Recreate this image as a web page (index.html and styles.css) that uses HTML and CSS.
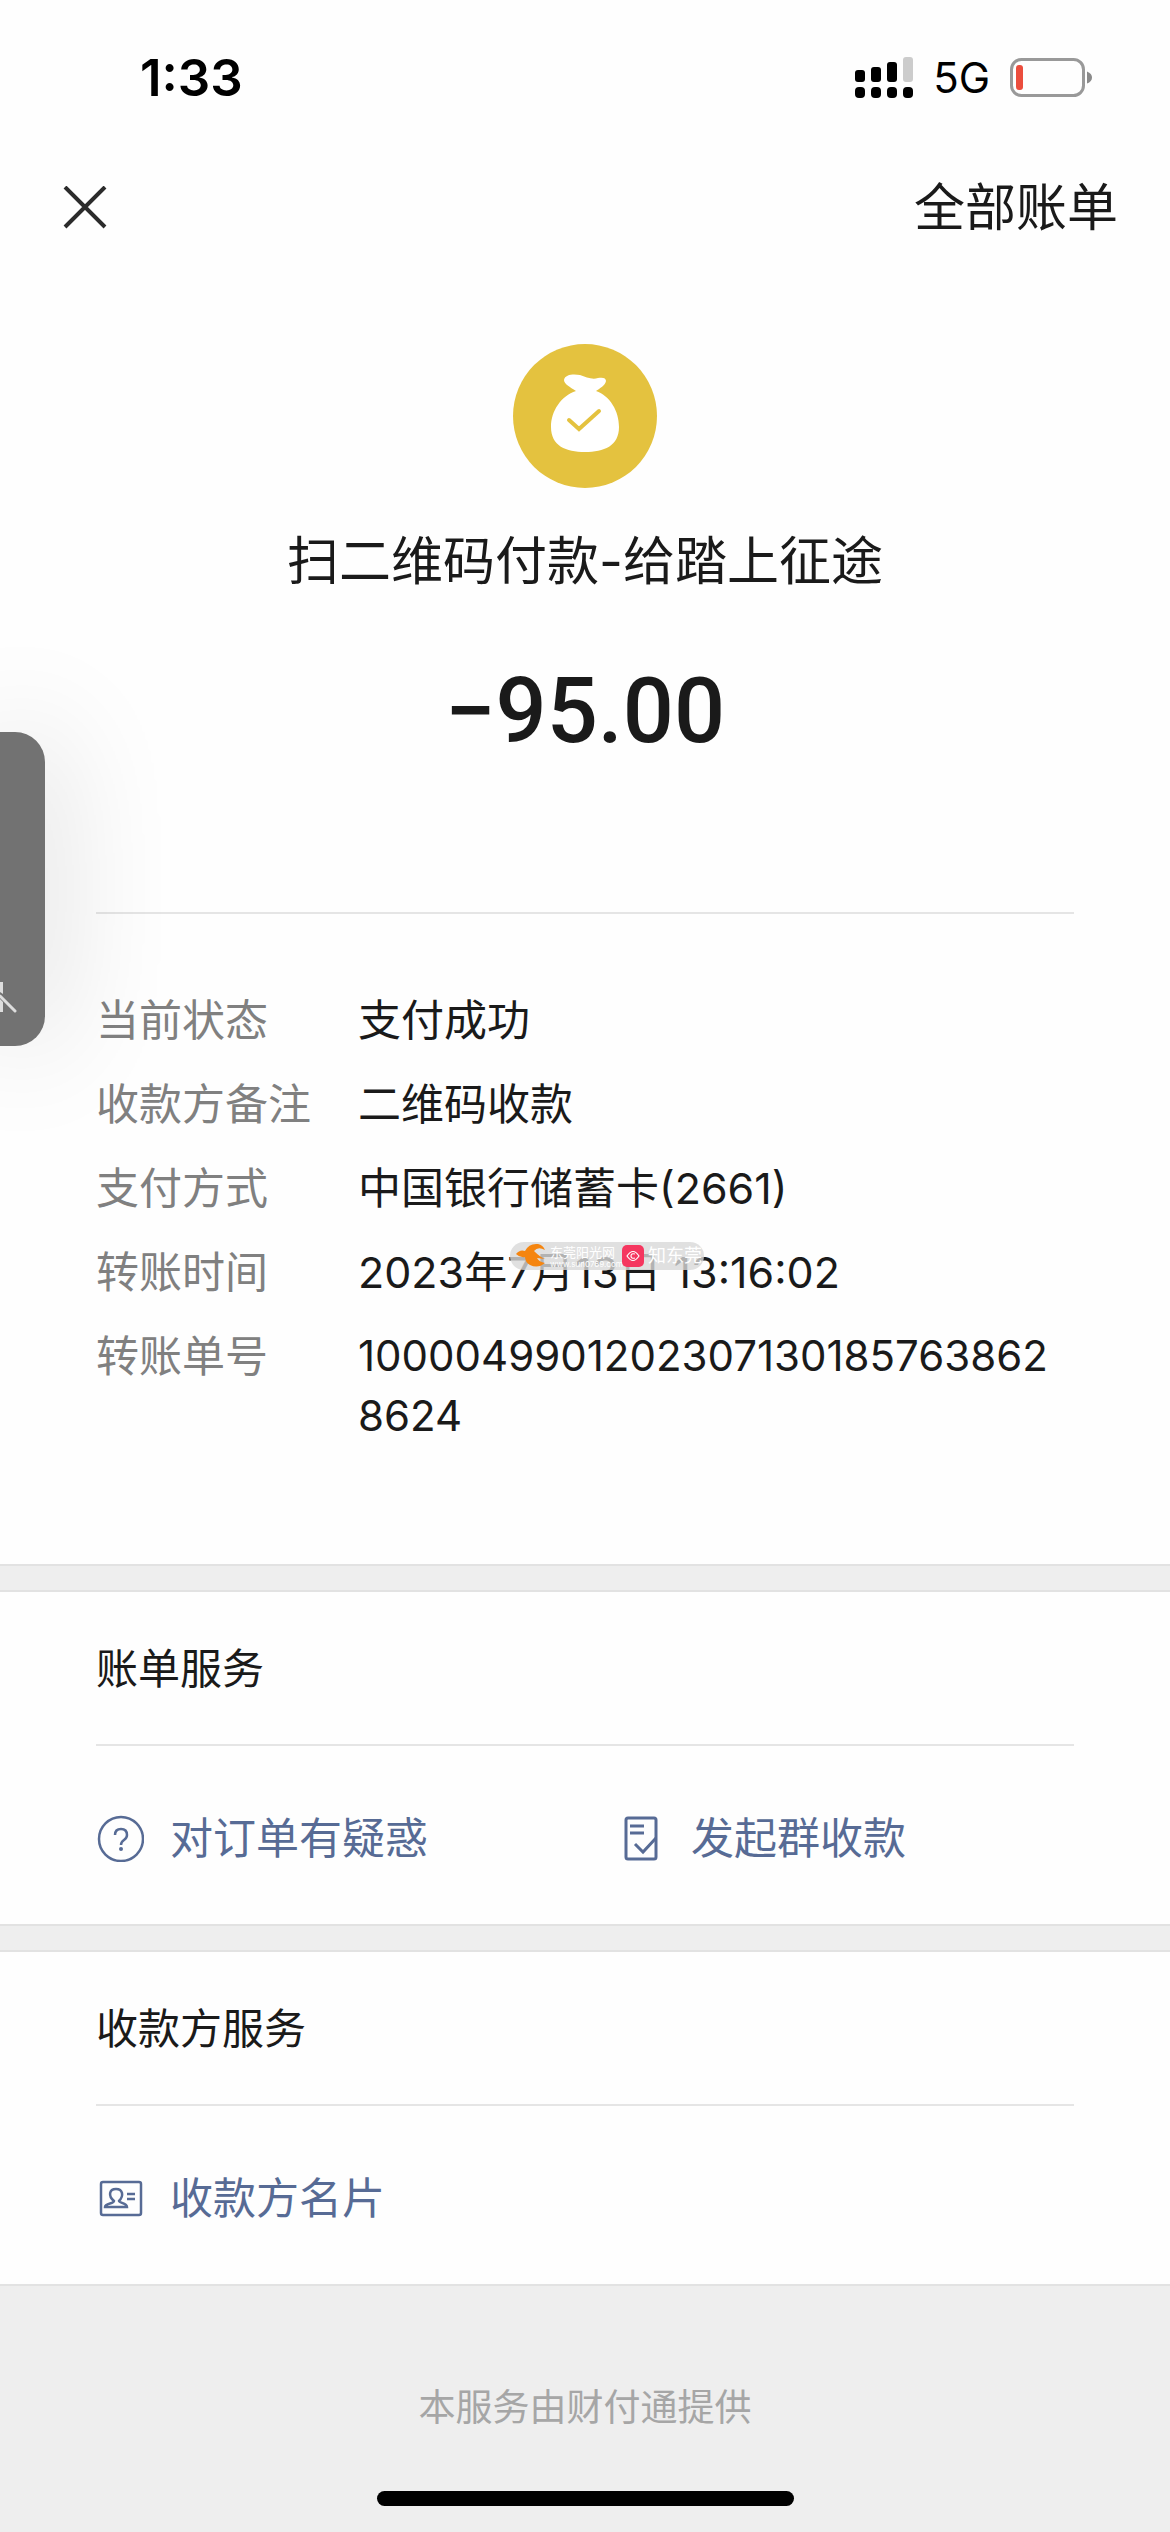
FILE: index.html
```html
<!DOCTYPE html>
<html lang="zh-CN">
<head>
    <meta charset="UTF-8">
    <meta name="viewport" content="width=device-width, initial-scale=1.0">
    <title>账单详情</title>
    <link rel="stylesheet" href="styles.css">
</head>
<body>
    <div class="status-bar">
        <span class="time">1:33</span>
        <div class="status-icons">
            <svg class="signal" viewBox="0 0 58 42" width="58" height="42">
                <rect x="0" y="13" width="10" height="12" rx="3"/>
                <rect x="16" y="10" width="10" height="15" rx="3"/>
                <rect x="32" y="5" width="10" height="20" rx="3"/>
                <rect x="48" y="0" width="10" height="25" rx="3" fill="#cccccc"/>
                <rect x="0" y="30" width="10" height="11" rx="4"/>
                <rect x="16" y="30" width="10" height="11" rx="4"/>
                <rect x="32" y="30" width="10" height="11" rx="4"/>
                <rect x="48" y="30" width="10" height="11" rx="4"/>
            </svg>
            <span class="network">5G</span>
            <svg class="battery" viewBox="0 0 82 40" width="82" height="40">
                <rect x="1.5" y="1.5" width="72" height="36" rx="10" fill="none" stroke="#999999" stroke-width="3"/>
                <rect x="6" y="7" width="7" height="25" rx="3" fill="#eb4d3d"/>
                <path d="M77 13.5q5 2 5 6t-5 6z" fill="#8a8a8a"/>
            </svg>
        </div>
    </div>

    <header class="nav">
        <button class="close" type="button" aria-label="关闭">
            <svg viewBox="0 0 44 44" width="44" height="44">
                <path d="M2 1l40 40M42 1L2 41" fill="none" stroke="#2b2b2b" stroke-width="4"/>
            </svg>
        </button>
        <a class="all-bills" href="#">全部账单</a>
    </header>

    <section class="summary">
        <svg class="avatar" viewBox="0 0 144 144" width="144" height="144">
            <circle cx="72" cy="72" r="72" fill="#e4c23f"/>
            <path d="M63 47C57 43 51 40 51 36C52 30 61 30 67 31C73 33 79 36 85 34C90 33 93 34 93 37C92 42 87 44 83 47C97 52 106 67 106 83C106 102 91 108 72 108C53 108 38 102 38 83C38 67 48 52 63 47Z" fill="#fff"/>
            <path d="M56 76l10 9l20-18" fill="none" stroke="#e4c23f" stroke-width="4" stroke-linecap="round"/>
        </svg>
        <h1 class="title">扫二维码付款-给踏上征途</h1>
        <p class="amount">−95.00</p>
    </section>

    <section class="details">
        <dl class="rows">
            <dt>当前状态</dt>
            <dd>支付成功</dd>
            <dt>收款方备注</dt>
            <dd>二维码收款</dd>
            <dt>支付方式</dt>
            <dd>中国银行储蓄卡(2661)</dd>
            <dt>转账时间</dt>
            <dd class="date">
                2023年7月13日 13:16:02
                <div class="watermark">
                    <svg viewBox="0 0 30 26" width="30" height="26">
                        <path d="M0 11Q4 6 9 8Q13 0 22 1Q27 2 29 7Q22 3 18 8Q24 14 29 16L21 15Q23 19 29 20Q22 26 14 22Q9 19 9 14Q4 15 0 11Z" fill="#f5850f"/>
                    </svg>
                    <div class="site">
                        <span>东莞阳光网</span>
                        <small>www.sun0769.com</small>
                    </div>
                    <svg viewBox="0 0 22 22" width="22" height="22">
                        <rect width="22" height="22" rx="5" fill="#f5365f"/>
                        <path d="M5 11q6-9 12 0q-6 9-12 0zM13 9q-4-1-4 2t4 2" fill="none" stroke="#fff" stroke-width="1.2"/>
                    </svg>
                    <span class="app">知东莞</span>
                </div>
            </dd>
            <dt>转账单号</dt>
            <dd class="number">10000499012023071301857638628624</dd>
        </dl>
    </section>

    <section class="service">
        <h2>账单服务</h2>
        <div class="links">
            <a href="#">
                <svg viewBox="0 0 48 48" width="48" height="48" fill="none" stroke="#576b95" stroke-width="2.5">
                    <circle cx="25" cy="25" r="22"/>
                    <path d="M19 21q0-6 6-6t6 6q0 3-3 5t-3 5"/>
                    <circle cx="25" cy="35" r="2" fill="#576b95" stroke="none"/>
                </svg>
                对订单有疑惑
            </a>
            <a href="#">
                <svg viewBox="0 0 48 48" width="48" height="48" fill="none" stroke="#576b95" stroke-width="3">
                    <rect x="9" y="4" width="30" height="41" rx="2"/>
                    <path d="M13 12h14M13 19h14M18 30l8 8l13-14"/>
                </svg>
                发起群收款
            </a>
        </div>
    </section>

    <section class="service">
        <h2>收款方服务</h2>
        <div class="links">
            <a href="#">
                <svg viewBox="0 0 48 48" width="48" height="48" fill="none" stroke="#576b95" stroke-width="2.5">
                    <rect x="5" y="8" width="40" height="33" rx="2"/>
                    <path d="M31 20h8M31 25h8"/>
                    <path d="M18 27C12 22 13 15 20 15S28 22 23 27C23 29 31 29 31 33H9C9 29 18 30 18 27Z"/>
                </svg>
                收款方名片
            </a>
        </div>
    </section>

    <footer class="footer">
        <p>本服务由财付通提供</p>
        <div class="home-indicator"></div>
    </footer>

    <!-- 悬浮窗 -->
    <div class="float-window">
        <svg viewBox="0 0 20 32" width="20" height="32">
            <path d="M0 0h3v12l-3-2zM0 17l3 3v10H0z" fill="#dddddd"/>
            <path d="M0 14l15 15" stroke="#dddddd" stroke-width="3" stroke-linecap="round"/>
        </svg>
    </div>
</body>
</html>
```
FILE: styles.css
```css
* {
    box-sizing: border-box;
}
body {
    margin: 0;
    min-height: 100vh;
    display: flex;
    flex-direction: column;
    position: relative;
    overflow-x: hidden;
    background-color: #fefefe;
    color: #1a1a1a;
    font-family: Inter, "Noto Sans CJK SC", sans-serif;
    font-size: 42px;
    line-height: 60px;
}
h1, h2, p, dl, dd {
    margin: 0;
    font-weight: 400;
}
a {
    color: inherit;
    text-decoration: none;
}
svg {
    display: block;
    flex-shrink: 0;
}
.status-bar {
    display: flex;
    justify-content: space-between;
    align-items: center;
    height: 156px;
    padding: 0 78px 0 140px;
    color: #000;
}
.time {
    font-size: 51px;
    font-weight: 600;
}
.status-icons {
    display: flex;
    align-items: center;
    gap: 20px;
}
.nav {
    display: flex;
    justify-content: space-between;
    align-items: center;
    height: 104px;
    padding: 0 52px 0 63px;
}
.close {
    display: flex;
    padding: 0;
    border: none;
    background: none;
    cursor: pointer;
}
.all-bills {
    font-size: 51px;
}
.summary {
    display: flex;
    flex-direction: column;
    align-items: center;
    margin: 0 96px;
    padding: 84px 0 152px;
    border-bottom: 2px solid #e5e5e5;
}
.title {
    margin-top: 36px;
    font-size: 52px;
    line-height: 76px;
}
.amount {
    margin-top: 64px;
    font-family: Roboto, sans-serif;
    font-size: 90px;
    font-weight: 500;
    line-height: 96px;
}
.details {
    padding: 76px 96px 118px;
}
.rows {
    display: grid;
    grid-template-columns: 238px 1fr;
    row-gap: 24px;
    column-gap: 24px;
    font-size: 43px;
}
.rows dt {
    color: #808080;
}
.rows dd {
    word-break: break-all;
}
.rows .number {
    padding-right: 16px;
    font-size: 42px;
}
.date {
    position: relative;
}
.watermark {
    position: absolute;
    left: 152px;
    top: 0;
    display: flex;
    align-items: center;
    gap: 4px;
    width: 194px;
    height: 28px;
    padding-left: 6px;
    border-radius: 14px;
    background-color: rgba(216, 216, 216, 0.8);
    color: #fff;
    line-height: 16px;
    white-space: nowrap;
}
.site {
    display: flex;
    flex-direction: column;
    width: 68px;
    font-size: 13px;
}
.site small {
    font-size: 8px;
    line-height: 8px;
}
.app {
    font-size: 18px;
}
.service {
    padding: 0 96px;
    border-bottom: 2px solid #e2e2e2;
}
.service::before {
    content: "";
    display: block;
    height: 24px;
    margin: 0 -96px;
    border-top: 2px solid #e2e2e2;
    border-bottom: 2px solid #e2e2e2;
    background-color: #eeeeee;
}
.service + .service::before {
    border-top: none;
}
.service h2 {
    padding: 47px 0 45px;
    border-bottom: 2px solid #e5e5e5;
    font-size: 42px;
}
.links {
    display: grid;
    grid-template-columns: 1fr 1fr;
    gap: 64px;
    padding: 62px 0 56px;
    color: #576b95;
    font-size: 43px;
}
.links a {
    display: flex;
    align-items: center;
    gap: 26px;
}
.footer {
    flex: 1;
    display: flex;
    flex-direction: column;
    align-items: center;
    justify-content: space-between;
    padding: 92px 0 26px;
    background-color: #eeeeee;
    color: #a6a6a6;
    font-size: 37px;
}
.home-indicator {
    width: 417px;
    height: 15px;
    border-radius: 8px;
    background-color: #000;
}
/* 屏幕左侧的悬浮窗，浮在内容之上 */
.float-window {
    position: absolute;
    left: 0;
    top: 732px;
    width: 45px;
    height: 314px;
    padding-top: 250px;
    border-radius: 0 30px 30px 0;
    background-color: #727272;
    box-shadow: 0 0 120px rgba(0, 0, 0, 0.2);
}
```
